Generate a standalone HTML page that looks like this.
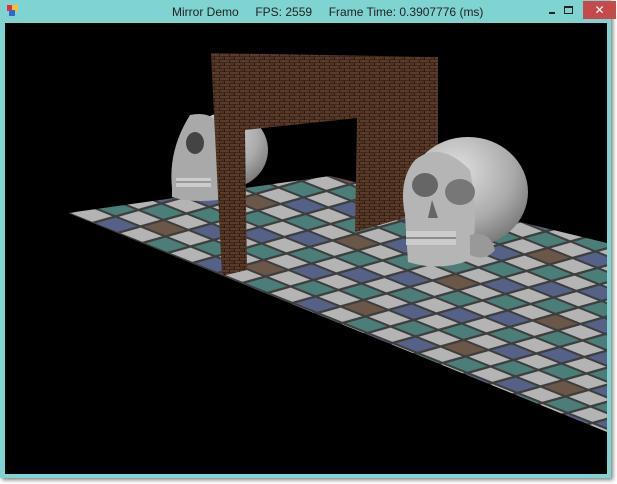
<!DOCTYPE html>
<html><head><style>
html,body{margin:0;padding:0;background:#fff;}
#w{position:absolute;left:0;top:0;width:611px;height:478px;background:#7fd3d0;box-shadow:2px 2px 4px rgba(0,0,0,.5);}
#t{position:absolute;left:0;top:0;width:611px;height:23px;font:12px "Liberation Sans",sans-serif;color:#222;}
</style></head><body>
<div id="w">
<div id="t">
 <div style="position:absolute;left:7px;top:5px;width:6px;height:6px;background:#d33"></div>
 <div style="position:absolute;left:12px;top:5px;width:6px;height:6px;background:#fb3"></div>
 <div style="position:absolute;left:9px;top:10px;width:6px;height:6px;background:#36c"></div>
 <div style="position:absolute;left:172px;top:5px;white-space:pre;">Mirror Demo     FPS: 2559     Frame Time: 0.3907776 (ms)</div>
 <div style="position:absolute;left:549px;top:12px;width:6px;height:2px;background:#222"></div>
 <div style="position:absolute;left:564px;top:6px;width:7px;height:5px;border:1px solid #222;border-top-width:2px"></div>
 <div style="position:absolute;left:583px;top:1px;width:33px;height:18px;background:#c74a4b;color:#fff;text-align:center;font-size:12px;line-height:18px;">✕</div>
</div>
<svg style="position:absolute;left:5px;top:23px" width="602" height="451" viewBox="5 23 602 451">
<defs>
 <pattern id="tp" patternUnits="userSpaceOnUse" width="4" height="4" patternTransform="matrix(25 10 23 -6.5 68 213)">
  <rect width="4" height="4" fill="#3e3e3e"/>
  <rect x="0.06" y="0.06" width="0.86" height="0.86" fill="#b4b4b4"/>
  <rect x="1.06" y="0.06" width="0.86" height="0.86" fill="#566188"/>
  <rect x="2.06" y="0.06" width="0.86" height="0.86" fill="#b4b4b4"/>
  <rect x="3.06" y="0.06" width="0.86" height="0.86" fill="#4b7d79"/>
  <rect x="0.06" y="1.06" width="0.86" height="0.86" fill="#4b7d79"/>
  <rect x="1.06" y="1.06" width="0.86" height="0.86" fill="#b4b4b4"/>
  <rect x="2.06" y="1.06" width="0.86" height="0.86" fill="#6b5747"/>
  <rect x="3.06" y="1.06" width="0.86" height="0.86" fill="#b4b4b4"/>
  <rect x="0.06" y="2.06" width="0.86" height="0.86" fill="#b4b4b4"/>
  <rect x="1.06" y="2.06" width="0.86" height="0.86" fill="#4b7d79"/>
  <rect x="2.06" y="2.06" width="0.86" height="0.86" fill="#b4b4b4"/>
  <rect x="3.06" y="2.06" width="0.86" height="0.86" fill="#566188"/>
  <rect x="0.06" y="3.06" width="0.86" height="0.86" fill="#566188"/>
  <rect x="1.06" y="3.06" width="0.86" height="0.86" fill="#b4b4b4"/>
  <rect x="2.06" y="3.06" width="0.86" height="0.86" fill="#4b7d79"/>
  <rect x="3.06" y="3.06" width="0.86" height="0.86" fill="#b4b4b4"/>
 </pattern>
 <pattern id="br" patternUnits="userSpaceOnUse" width="10" height="6">
  <rect width="10" height="6" fill="#2e1c12"/>
  <rect x="0" y="0" width="9" height="2.4" fill="#5a3a28"/>
  <rect x="-5" y="3" width="9" height="2.4" fill="#4e3222"/>
  <rect x="5" y="3" width="9" height="2.4" fill="#5a3a28"/>
 </pattern>
 <radialGradient id="sk" cx="0.4" cy="0.3" r="0.8">
  <stop offset="0" stop-color="#e0e0e0"/><stop offset="0.6" stop-color="#aaa"/><stop offset="1" stop-color="#6a6a6a"/>
 </radialGradient>
</defs>
<rect x="5" y="23" width="602" height="451" fill="#000"/>
<polygon points="68,213 330,176 607,243 607,432" fill="url(#tp)"/>
<g>
 <ellipse cx="228" cy="150" rx="40" ry="38" fill="url(#sk)"/>
 <path d="M172,188 Q168,150 190,115 Q215,110 220,130 L218,200 Q190,203 172,197 Z" fill="#a9a9a9"/>
 <ellipse cx="195" cy="143" rx="9" ry="11" fill="#444"/>
 <rect x="176" y="178" width="35" height="9" fill="#ccc"/>
 <path d="M176,182 H211" stroke="#666" stroke-width="1"/>
</g>
<path d="M211,53 L438,57 L438,208 L355,232 L357,118 L245,130 L247,270 L222,276 Z" fill="url(#br)"/>
<g>
 <ellipse cx="468" cy="192" rx="60" ry="55" fill="url(#sk)"/>
 <path d="M405,215 Q398,180 415,160 Q440,140 470,170 Q480,220 470,260 Q440,272 408,262 Z" fill="#b5b5b5"/>
 <ellipse cx="425" cy="185" rx="13" ry="12" fill="#666"/>
 <ellipse cx="460" cy="192" rx="15" ry="13" fill="#777"/>
 <path d="M432,200 l-4,18 l10,0 z" fill="#666"/>
 <rect x="406" y="231" width="50" height="14" fill="#ccc"/>
 <path d="M406,238 H456" stroke="#777" stroke-width="1.5"/>
 <path d="M470,235 Q490,230 495,250 Q485,262 470,255 Z" fill="#999"/>
</g>
</svg>
</div>
</body></html>
